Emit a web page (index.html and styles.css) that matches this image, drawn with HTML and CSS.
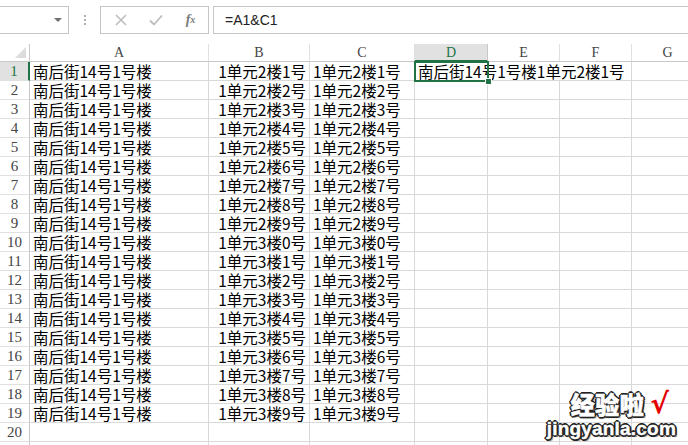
FILE: index.html
```html
<!DOCTYPE html>
<html>
<head>
<meta charset="utf-8">
<link rel="stylesheet" href="styles.css">
</head>
<body>
<div class="app">
  <div class="toolbar">
    <div class="namebox"><span class="caret"></span></div>
    <div class="dots"><i></i><i></i><i></i></div>
    <div class="btns">
      <span class="btn x">
        <svg width="12" height="12" viewBox="0 0 12 12"><path d="M1 1L11 11M11 1L1 11" stroke="#bdbdbd" stroke-width="1.6" fill="none"/></svg>
      </span>
      <span class="btn ok">
        <svg width="14" height="12" viewBox="0 0 14 12"><path d="M1 6.5L5 10.5L13 1.5" stroke="#bdbdbd" stroke-width="1.8" fill="none"/></svg>
      </span>
      <span class="btn fx">f<sub>x</sub></span>
    </div>
    <div class="formula">=A1&amp;C1</div>
  </div>

  <div class="sheet">
    <div class="corner"><span class="tri"></span></div>
    <div class="ch">A</div><div class="ch">B</div><div class="ch">C</div><div class="ch sel">D</div><div class="ch">E</div><div class="ch">F</div><div class="ch">G</div>

    <div class="rh sel">1</div><div class="c">南后街14号1号楼</div><div class="c r">1单元2楼1号</div><div class="c">1单元2楼1号</div><div class="c over">南后街14号1号楼1单元2楼1号</div><div class="c nr"></div><div class="c"></div><div class="c"></div>
    <div class="rh">2</div><div class="c">南后街14号1号楼</div><div class="c r">1单元2楼2号</div><div class="c">1单元2楼2号</div><div class="c"></div><div class="c"></div><div class="c"></div><div class="c"></div>
    <div class="rh">3</div><div class="c">南后街14号1号楼</div><div class="c r">1单元2楼3号</div><div class="c">1单元2楼3号</div><div class="c"></div><div class="c"></div><div class="c"></div><div class="c"></div>
    <div class="rh">4</div><div class="c">南后街14号1号楼</div><div class="c r">1单元2楼4号</div><div class="c">1单元2楼4号</div><div class="c"></div><div class="c"></div><div class="c"></div><div class="c"></div>
    <div class="rh">5</div><div class="c">南后街14号1号楼</div><div class="c r">1单元2楼5号</div><div class="c">1单元2楼5号</div><div class="c"></div><div class="c"></div><div class="c"></div><div class="c"></div>
    <div class="rh">6</div><div class="c">南后街14号1号楼</div><div class="c r">1单元2楼6号</div><div class="c">1单元2楼6号</div><div class="c"></div><div class="c"></div><div class="c"></div><div class="c"></div>
    <div class="rh">7</div><div class="c">南后街14号1号楼</div><div class="c r">1单元2楼7号</div><div class="c">1单元2楼7号</div><div class="c"></div><div class="c"></div><div class="c"></div><div class="c"></div>
    <div class="rh">8</div><div class="c">南后街14号1号楼</div><div class="c r">1单元2楼8号</div><div class="c">1单元2楼8号</div><div class="c"></div><div class="c"></div><div class="c"></div><div class="c"></div>
    <div class="rh">9</div><div class="c">南后街14号1号楼</div><div class="c r">1单元2楼9号</div><div class="c">1单元2楼9号</div><div class="c"></div><div class="c"></div><div class="c"></div><div class="c"></div>
    <div class="rh">10</div><div class="c">南后街14号1号楼</div><div class="c r">1单元3楼0号</div><div class="c">1单元3楼0号</div><div class="c"></div><div class="c"></div><div class="c"></div><div class="c"></div>
    <div class="rh">11</div><div class="c">南后街14号1号楼</div><div class="c r">1单元3楼1号</div><div class="c">1单元3楼1号</div><div class="c"></div><div class="c"></div><div class="c"></div><div class="c"></div>
    <div class="rh">12</div><div class="c">南后街14号1号楼</div><div class="c r">1单元3楼2号</div><div class="c">1单元3楼2号</div><div class="c"></div><div class="c"></div><div class="c"></div><div class="c"></div>
    <div class="rh">13</div><div class="c">南后街14号1号楼</div><div class="c r">1单元3楼3号</div><div class="c">1单元3楼3号</div><div class="c"></div><div class="c"></div><div class="c"></div><div class="c"></div>
    <div class="rh">14</div><div class="c">南后街14号1号楼</div><div class="c r">1单元3楼4号</div><div class="c">1单元3楼4号</div><div class="c"></div><div class="c"></div><div class="c"></div><div class="c"></div>
    <div class="rh">15</div><div class="c">南后街14号1号楼</div><div class="c r">1单元3楼5号</div><div class="c">1单元3楼5号</div><div class="c"></div><div class="c"></div><div class="c"></div><div class="c"></div>
    <div class="rh">16</div><div class="c">南后街14号1号楼</div><div class="c r">1单元3楼6号</div><div class="c">1单元3楼6号</div><div class="c"></div><div class="c"></div><div class="c"></div><div class="c"></div>
    <div class="rh">17</div><div class="c">南后街14号1号楼</div><div class="c r">1单元3楼7号</div><div class="c">1单元3楼7号</div><div class="c"></div><div class="c"></div><div class="c"></div><div class="c"></div>
    <div class="rh">18</div><div class="c">南后街14号1号楼</div><div class="c r">1单元3楼8号</div><div class="c">1单元3楼8号</div><div class="c"></div><div class="c"></div><div class="c"></div><div class="c"></div>
    <div class="rh">19</div><div class="c">南后街14号1号楼</div><div class="c r">1单元3楼9号</div><div class="c">1单元3楼9号</div><div class="c"></div><div class="c"></div><div class="c"></div><div class="c"></div>
    <div class="rh">20</div><div class="c"></div><div class="c"></div><div class="c"></div><div class="c"></div><div class="c"></div><div class="c"></div><div class="c"></div>
    <div class="rh"></div><div class="c"></div><div class="c"></div><div class="c"></div><div class="c"></div><div class="c"></div><div class="c"></div><div class="c"></div>

    <div class="selbox"><span class="handle"></span></div>
  </div>

  <div class="watermark">
    <div class="wm1"><span class="wmc">经验啦</span><span class="tick">√</span></div>
    <div class="wm2">jingyanla.com</div>
  </div>
</div>
</body>
</html>
```

FILE: styles.css
```css
html, body {
  margin: 0;
  padding: 0;
  background: #fff;
}
.app {
  position: relative;
  width: 688px;
  height: 445px;
  overflow: hidden;
  font-family: "Noto Sans CJK SC", "Noto Sans", sans-serif;
}
.toolbar {
  height: 44px;
  display: flex;
  align-items: flex-start;
  padding-top: 6px;
  box-sizing: border-box;
  background: #fff;
}
.namebox {
  width: 70px;
  height: 28px;
  margin-left: -1px;
  border: 1px solid #c6c6c6;
  box-sizing: border-box;
  display: flex;
  align-items: center;
  justify-content: flex-end;
  padding-right: 6px;
}
.caret {
  width: 0;
  height: 0;
  border-left: 4px solid transparent;
  border-right: 4px solid transparent;
  border-top: 4px solid #707070;
}
.dots {
  width: 31px;
  height: 28px;
  display: flex;
  flex-direction: column;
  align-items: center;
  justify-content: center;
  gap: 2px;
}
.dots i {
  display: block;
  width: 2px;
  height: 2px;
  background: #b0b0b0;
}
.btns {
  width: 109px;
  height: 28px;
  border: 1px solid #c6c6c6;
  box-sizing: border-box;
  display: flex;
  align-items: center;
}
.btn {
  width: 36px;
  display: flex;
  justify-content: center;
  align-items: center;
}
.btn.x { padding-left: 2px; }
.fx {
  font-family: "Liberation Serif", serif;
  font-style: italic;
  font-weight: bold;
  font-size: 14px;
  color: #7a7a7a;
  line-height: 14px;
}
.fx sub {
  font-size: 10px;
  vertical-align: -1px;
}
.formula {
  margin-left: 4px;
  flex: 1;
  height: 28px;
  margin-right: -4px;
  border: 1px solid #c6c6c6;
  box-sizing: border-box;
  font-family: "Liberation Sans", sans-serif;
  font-size: 14px;
  color: #222;
  line-height: 26px;
  padding-left: 11px;
}
.sheet {
  position: relative;
  display: grid;
  grid-template-columns: 30px 179px 101px 105px 73px 72px 72px 72px;
  grid-template-rows: 18px;
  grid-auto-rows: 19px;
}
.corner {
  position: relative;
  border-right: 1px solid #c8c8c8;
  border-bottom: 1px solid #c8c8c8;
}
.tri {
  position: absolute;
  right: 3px;
  bottom: 3px;
  width: 0;
  height: 0;
  border-left: 11px solid transparent;
  border-bottom: 11px solid #dcdcdc;
}
.ch {
  border-right: 1px solid #e0e0e0;
  border-bottom: 1px solid #c8c8c8;
  font-family: "Liberation Serif", serif;
  font-size: 14px;
  color: #444;
  text-align: center;
  line-height: 18px;
}
.ch.sel {
  background: #e1e1e1;
  color: #217346;
  border-right-color: #c8c8c8;
  border-bottom: 2px solid #217346;
}
.rh {
  border-right: 1px solid #c8c8c8;
  border-bottom: 1px solid #e0e0e0;
  font-family: "Liberation Serif", serif;
  font-size: 15px;
  color: #444;
  text-align: center;
  line-height: 19px;
}
.rh.sel {
  background: #e1e1e1;
  color: #217346;
  border-right: 2px solid #217346;
}
.c {
  border-right: 1px solid #d9d9d9;
  border-bottom: 1px solid #d9d9d9;
  font-size: 15.5px;
  line-height: 19px;
  color: #000;
  padding: 0 3px;
  white-space: nowrap;
  box-sizing: border-box;
  min-width: 0;
}
.c.r { text-align: right; }
.c.over { overflow: visible; border-right: none; }
.c.nr { border-right: none; }
.selbox {
  position: absolute;
  left: 414px;
  top: 17px;
  width: 75px;
  height: 21px;
  border: 2px solid #217346;
  box-sizing: border-box;
  pointer-events: none;
}
.handle {
  position: absolute;
  right: -5px;
  bottom: -5px;
  width: 5px;
  height: 5px;
  background: #217346;
  border: 1px solid #fff;
}
.watermark {
  position: absolute;
  left: 540px;
  top: 390px;
  width: 136px;
  display: flex;
  flex-direction: column;
  align-items: flex-end;
  font-weight: bold;
  color: #fff;
}
.wm1 {
  display: flex;
  align-items: center;
  height: 28px;
  margin-right: 7px;
}
.wmc {
  font-family: "Noto Sans CJK SC", sans-serif;
  font-weight: 900;
  font-size: 24px;
  line-height: 28px;
  letter-spacing: 0.5px;
  -webkit-text-stroke: 0.6px #fff;
  text-shadow: -1px -1px 0 #222, 1px -1px 0 #222, -1px 1px 0 #222, 1px 1px 0 #222, 0 2px 0 #222, 0 -2px 0 #222, 2px 0 0 #222, -2px 0 0 #222, 2px 2px 1px #777;
}
.tick {
  color: #e60000;
  font-family: "DejaVu Sans", sans-serif;
  font-weight: bold;
  font-size: 28px;
  line-height: 28px;
  margin-left: 6px;
}
.wm2 {
  font-family: "Liberation Sans", sans-serif;
  font-weight: bold;
  font-size: 19px;
  line-height: 22px;
  letter-spacing: 0.2px;
  -webkit-text-stroke: 0.4px #fff;
  text-shadow: -1px -1px 0 #222, 1px -1px 0 #222, -1px 1px 0 #222, 1px 1px 0 #222, 0 2px 0 #222, 0 -2px 0 #222, 2px 0 0 #222, -2px 0 0 #222, 2px 2px 1px #777;
}
```
